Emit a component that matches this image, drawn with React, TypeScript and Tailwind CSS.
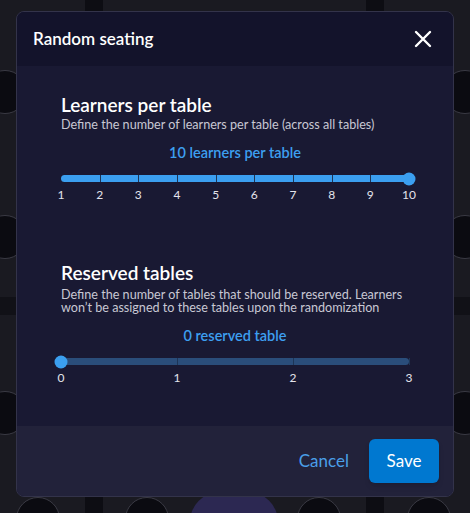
import React from "react";

const font = { fontFamily: "Lato, 'Open Sans', sans-serif" };

interface SliderProps {
  min: number;
  max: number;
  value: number;
  label: string;
  filled: boolean;
}

// Stepped slider with tick marks and labels under each step
function StepSlider({ min, max, value, label, filled }: SliderProps) {
  const steps = Array.from({ length: max - min + 1 }, (_, i) => min + i);
  const pct = ((value - min) / (max - min)) * 100;

  return (
    <div className="flex flex-col">
      <p className="text-center text-[14.5px] font-semibold leading-[20px] text-[#3d9ff0]">
        {label}
      </p>
      <div className="relative mt-[12px] h-[7px]">
        <div
          className={`absolute inset-0 rounded-full ${
            filled ? "bg-[#3b9ff0]" : "bg-[#2a4d7a]"
          }`}
        />
        {steps.slice(1).map((s) => (
          <div
            key={s}
            className="absolute top-0 h-[7px] w-px bg-[#1d3556]"
            style={{ left: `${((s - min) / (max - min)) * 100}%` }}
          />
        ))}
        <div
          className="absolute top-1/2 h-[13px] w-[13px] -translate-x-1/2 -translate-y-1/2 rounded-full bg-[#3b9ff0]"
          style={{ left: `${pct}%` }}
        />
      </div>
      <div className="relative mt-[5px] h-[16px]">
        {steps.map((s) => (
          <span
            key={s}
            className="absolute top-0 -translate-x-1/2 text-[12px] leading-[16px] text-[#e4e4ec]"
            style={{ left: `${((s - min) / (max - min)) * 100}%` }}
          >
            {s}
          </span>
        ))}
      </div>
    </div>
  );
}

const seats = [
  { x: -17, y: 70 },
  { x: -17, y: 215 },
  { x: -17, y: 391 },
  { x: 443, y: 70 },
  { x: 443, y: 215 },
  { x: 443, y: 391 },
  { x: 16, y: 497 },
  { x: 125, y: 497 },
  { x: 297, y: 497 },
  { x: 407, y: 497 },
];

export default function App() {
  return (
    <div
      className="relative h-[513px] w-[470px] overflow-hidden bg-[#1a1a21]"
      style={font}
    >
      {/* Seating plan behind the dialog */}
      <div className="absolute left-[85px] top-0 h-full w-[18px] bg-[#0d0d13]" />
      <div className="absolute left-[366px] top-0 h-full w-[18px] bg-[#0d0d13]" />
      <div className="absolute left-0 top-[297px] h-[18px] w-full bg-[#111117]" />
      {seats.map((s, i) => (
        <div
          key={i}
          className="absolute h-[44px] w-[44px] rounded-full border border-[#3a3a44] bg-[#0b0b11]"
          style={{ left: s.x, top: s.y }}
        />
      ))}
      <div className="absolute left-[190px] top-[492px] h-[60px] w-[88px] rounded-full bg-[#2c2852]" />

      {/* Dialog */}
      <div className="relative ml-[16px] mt-[11px] flex h-[486px] w-[438px] flex-col overflow-hidden rounded-[8px] border border-[#33334a] bg-[#191933]">
        <div className="flex h-[54px] shrink-0 items-center justify-between bg-[#13132b] pl-[16px] pr-[21px]">
          <h1 className="text-[17px] font-semibold text-white">Random seating</h1>
          <svg
            width="18"
            height="18"
            viewBox="0 0 18 18"
            fill="none"
            stroke="white"
            strokeWidth="2.4"
            strokeLinecap="round"
          >
            <path d="M2 2 L16 16 M16 2 L2 16" />
          </svg>
        </div>

        <div className="flex flex-1 flex-col px-[44px] pt-[27px]">
          <h2 className="text-[19px] font-semibold leading-[24px] text-white">
            Learners per table
          </h2>
          <p className="mt-[1px] text-[12.6px] leading-[14px] text-[#c8c8d4]">
            Define the number of learners per table (across all tables)
          </p>
          <div className="mt-[11px]">
            <StepSlider
              min={1}
              max={10}
              value={10}
              label="10 learners per table"
              filled
            />
          </div>

          <h2 className="mt-[58px] text-[19px] font-semibold leading-[24px] text-white">
            Reserved tables
          </h2>
          <p className="mt-[3px] text-[12.6px] leading-[13px] text-[#c8c8d4]">
            Define the number of tables that should be reserved. Learners won’t
            be assigned to these tables upon the randomization
          </p>
          <div className="mt-[12px]">
            <StepSlider
              min={0}
              max={3}
              value={0}
              label="0 reserved table"
              filled={false}
            />
          </div>
        </div>

        <div className="flex h-[70px] shrink-0 items-center justify-end gap-[20px] bg-[#22223a] pr-[14px]">
          <button className="text-[17px] text-[#4a9fe8]">Cancel</button>
          <button className="h-[44px] w-[70px] rounded-[6px] bg-[#0078d0] text-[17px] text-white shadow-md">
            Save
          </button>
        </div>
      </div>
    </div>
  );
}
